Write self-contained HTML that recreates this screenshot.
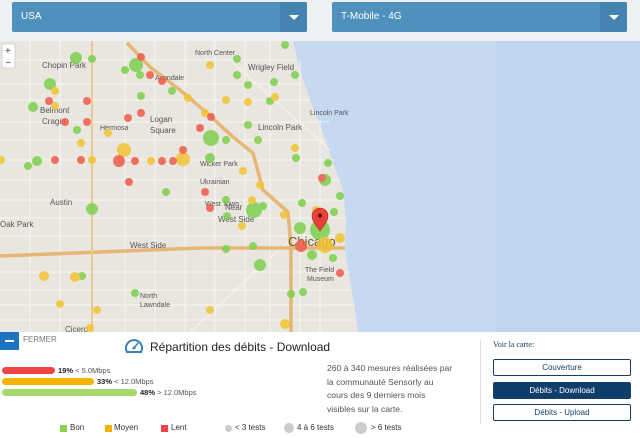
<!DOCTYPE html>
<html><head><meta charset="utf-8"><style>
*{margin:0;padding:0;box-sizing:border-box}
body{width:640px;height:438px;overflow:hidden;background:#fff;font-family:"Liberation Sans",sans-serif;position:relative}
.top{position:absolute;left:0;top:0;width:640px;height:41px;background:#edf1f4}
.dd{position:absolute;top:2px;height:30px;background:#4f91bd;border-radius:2px;color:#fff;font-size:10px;line-height:30px;padding-left:9px}
.dd .ar{position:absolute;right:0;top:0;width:27px;height:30px;background:#4583b0;border-radius:0 2px 2px 0}
.dd .ar:after{content:"";position:absolute;left:9px;top:13px;border-left:5px solid transparent;border-right:5px solid transparent;border-top:5px solid #fff}
.map{position:absolute;left:0;top:41px}
.panel{position:absolute;left:0;top:332px;width:640px;height:106px;background:#fff}
.t{position:absolute;white-space:nowrap}
.bar{position:absolute;left:2px;height:7px;border-radius:4px}
.btn{position:absolute;left:493px;width:138px;height:17px;border:1px solid #163f66;border-radius:2px;font-size:8px;text-align:center;line-height:15px;color:#163f66}
.lg{position:absolute;top:423px;font-size:8px;color:#333;white-space:nowrap}
.sq{position:absolute;width:7px;height:7px}
.ci{position:absolute;border-radius:50%;background:#ccc}
</style></head><body>
<div class="top">
<div class="dd" style="left:12px;width:295px">USA<div class="ar"></div></div>
<div class="dd" style="left:332px;width:295px">T-Mobile - 4G<div class="ar"></div></div>
</div>
<svg class="map" width="640" height="291" viewBox="0 41 640 291">
<rect x="0" y="41" width="640" height="291" fill="#e9e6df"/>
<path d="M293 41 L300 70 L310 100 L322 130 L332 160 L343 190 L346 220 L345 250 L350 280 L355 310 L358 332 L640 332 L640 41 Z" fill="#c6d9f0"/>
<rect x="496" y="41" width="144" height="291" fill="#c2d5ef"/>
<g stroke="#fff" stroke-width="1" opacity="0.6">
<path d="M0 84H300M0 122H330M0 160H335M0 200H345M0 236H345M0 272H350M0 305H355M0 60H295M0 100H310M0 140H325M0 180H340M0 218H345M0 290H350M0 320H356"/>
<path d="M30 41V332M60 41V332M92 41V332M125 41V332M155 41V332M185 41V332M215 41V332M245 41V332M270 41V332M300 60V332M320 120V332"/>
<path d="M190 332L290 240M230 60L330 150"/>
</g>
<g fill="none" stroke="#e6b676" stroke-width="3.5">
<path d="M127 43L150 67L180 90L207 113L233 137L253 153L263 190L288 212L291 248L291 332"/>
<path d="M0 256L200 248L345 248"/>
<path d="M92 41V332" stroke-width="2" stroke="#ecc894"/>
</g>
<g font-size="8" fill="#555" font-family="Liberation Sans">
<text x="42" y="68">Chopin Park</text><text x="40" y="113">Belmont</text><text x="42" y="124">Cragin</text>
<text x="150" y="122">Logan</text><text x="150" y="133">Square</text><text x="100" y="130" font-size="7">Hermosa</text>
<text x="200" y="166" font-size="7">Wicker Park</text><text x="248" y="70">Wrigley Field</text><text x="258" y="130">Lincoln Park</text>
<text x="50" y="205">Austin</text><text x="0" y="227">Oak Park</text><text x="130" y="248">West Side</text>
<text x="225" y="210">Near</text><text x="218" y="222">West Side</text><text x="288" y="246" font-size="13" fill="#6a5a20">Chicago</text>
<text x="305" y="272" font-size="7">The Field</text><text x="307" y="281" font-size="7">Museum</text>
<text x="140" y="298" font-size="7">North</text><text x="140" y="307" font-size="7">Lawndale</text><text x="65" y="332">Cicero</text>
<text x="310" y="115" font-size="7">Lincoln Park</text><text x="195" y="55" font-size="7">North Center</text><text x="155" y="80" font-size="7">Avondale</text>
<text x="200" y="184" font-size="7">Ukrainian</text><text x="205" y="206" font-size="7">West Town</text>
</g>
<g opacity="0.85">
<g fill="#7ed04e">
<circle cx="76" cy="58" r="6"/><circle cx="92" cy="59" r="4"/><circle cx="136" cy="65" r="7"/><circle cx="125" cy="70" r="4"/><circle cx="140" cy="75" r="4"/><circle cx="50" cy="84" r="6"/><circle cx="33" cy="107" r="5"/><circle cx="77" cy="130" r="4"/><circle cx="141" cy="96" r="4"/><circle cx="172" cy="91" r="4"/><circle cx="237" cy="59" r="4"/><circle cx="237" cy="75" r="4"/><circle cx="248" cy="85" r="4"/><circle cx="270" cy="101" r="4"/><circle cx="285" cy="45" r="4"/><circle cx="295" cy="75" r="4"/><circle cx="274" cy="82" r="4"/><circle cx="248" cy="125" r="4"/><circle cx="211" cy="138" r="8"/><circle cx="210" cy="158" r="5"/><circle cx="226" cy="140" r="4"/><circle cx="258" cy="140" r="4"/><circle cx="37" cy="161" r="5"/><circle cx="28" cy="166" r="4"/><circle cx="92" cy="209" r="6"/><circle cx="166" cy="192" r="4"/><circle cx="226" cy="200" r="4"/><circle cx="227" cy="216" r="4"/><circle cx="254" cy="210" r="8"/><circle cx="263" cy="206" r="4"/><circle cx="226" cy="249" r="4"/><circle cx="253" cy="246" r="4"/><circle cx="260" cy="265" r="6"/><circle cx="135" cy="293" r="4"/><circle cx="291" cy="294" r="4"/><circle cx="303" cy="292" r="4"/><circle cx="82" cy="276" r="4"/><circle cx="325" cy="180" r="6"/><circle cx="340" cy="196" r="4"/><circle cx="320" cy="230" r="10"/><circle cx="300" cy="228" r="6"/><circle cx="334" cy="212" r="4"/><circle cx="312" cy="255" r="5"/><circle cx="333" cy="258" r="4"/><circle cx="302" cy="203" r="4"/><circle cx="296" cy="158" r="4"/><circle cx="328" cy="163" r="4"/></g>
<g fill="#f2c332">
<circle cx="210" cy="65" r="4"/><circle cx="188" cy="98" r="4"/><circle cx="226" cy="100" r="4"/><circle cx="248" cy="102" r="4"/><circle cx="275" cy="97" r="4"/><circle cx="205" cy="113" r="4"/><circle cx="55" cy="91" r="4"/><circle cx="55" cy="106" r="4"/><circle cx="108" cy="133" r="4"/><circle cx="81" cy="143" r="4"/><circle cx="124" cy="150" r="7"/><circle cx="183" cy="159" r="7"/><circle cx="1" cy="160" r="4"/><circle cx="92" cy="160" r="4"/><circle cx="151" cy="161" r="4"/><circle cx="243" cy="171" r="4"/><circle cx="260" cy="185" r="4"/><circle cx="295" cy="148" r="4"/><circle cx="242" cy="226" r="4"/><circle cx="252" cy="200" r="4"/><circle cx="44" cy="276" r="5"/><circle cx="75" cy="277" r="5"/><circle cx="60" cy="304" r="4"/><circle cx="97" cy="310" r="4"/><circle cx="210" cy="310" r="4"/><circle cx="90" cy="328" r="4"/><circle cx="285" cy="324" r="5"/><circle cx="325" cy="245" r="8"/><circle cx="316" cy="210" r="4"/><circle cx="340" cy="238" r="5"/><circle cx="284" cy="215" r="4"/></g>
<g fill="#ef5b4a">
<circle cx="141" cy="57" r="4"/><circle cx="150" cy="75" r="4"/><circle cx="162" cy="81" r="4"/><circle cx="49" cy="101" r="4"/><circle cx="87" cy="101" r="4"/><circle cx="65" cy="122" r="4"/><circle cx="87" cy="122" r="4"/><circle cx="141" cy="113" r="4"/><circle cx="128" cy="118" r="4"/><circle cx="200" cy="128" r="4"/><circle cx="211" cy="117" r="4"/><circle cx="183" cy="150" r="4"/><circle cx="119" cy="161" r="6"/><circle cx="55" cy="160" r="4"/><circle cx="81" cy="160" r="4"/><circle cx="135" cy="161" r="4"/><circle cx="162" cy="161" r="4"/><circle cx="173" cy="161" r="4"/><circle cx="129" cy="182" r="4"/><circle cx="210" cy="208" r="4"/><circle cx="205" cy="192" r="4"/><circle cx="301" cy="246" r="6"/><circle cx="340" cy="273" r="4"/><circle cx="322" cy="178" r="4"/></g>
</g>
<path d="M320 231 C313 222 312 219 312 216 A7 7 0 0 1 328 216 C328 219 327 222 320 231Z" fill="#e8413a" stroke="#b22" stroke-width="0.6"/>
<circle cx="320" cy="215.5" r="2" fill="#5a0e0a"/>
<rect x="2" y="44" width="13" height="24" fill="#fff" stroke="#ccc" stroke-width="0.8"/>
<text x="5" y="54" font-size="10" fill="#444">+</text><text x="5.5" y="66" font-size="10" fill="#444">−</text>
</svg>
<div class="panel">
<div style="position:absolute;left:0;top:0;width:19px;height:18px;background:#1c73c0;"></div>
<div style="position:absolute;left:5px;top:8px;width:9px;height:2px;background:#fff"></div>
<div class="t" style="left:23px;top:3px;font-size:8px;color:#777">FERMER</div>
<svg style="position:absolute;left:124px;top:5px" width="20" height="18" viewBox="0 0 20 18"><path d="M3 15A8 8 0 1 1 17 15Z" fill="none" stroke="#3a7fb8" stroke-width="2"/><path d="M10 11L14 6" stroke="#3a7fb8" stroke-width="1.5"/><circle cx="10" cy="11" r="1.5" fill="#3a7fb8"/></svg>
<div class="t" style="left:150px;top:8px;font-size:12px;color:#222">Répartition des débits - Download</div>
<div class="bar" style="top:35px;width:53px;background:#f04447"></div>
<div class="bar" style="top:46px;width:92px;background:#f4b400"></div>
<div class="bar" style="top:57px;width:135px;background:#a6d96a"></div>
<div class="t" style="left:58px;top:34px;font-size:7.5px;color:#555"><b style="color:#222">19%</b> &lt; 5.0Mbps</div>
<div class="t" style="left:97px;top:45px;font-size:7.5px;color:#555"><b style="color:#222">33%</b> &lt; 12.0Mbps</div>
<div class="t" style="left:140px;top:56px;font-size:7.5px;color:#555"><b style="color:#222">48%</b> &gt; 12.0Mbps</div>
<div class="t" style="left:327px;top:30px;font-size:8.6px;line-height:13.5px;color:#555;white-space:normal;width:152px">260 à 340 mesures réalisées par<br>la communauté Sensorly au<br>cours des 9 derniers mois<br>visibles sur la carte.</div>
<div style="position:absolute;left:480px;top:8px;width:1px;height:84px;background:#ddd"></div>
<div class="t" style="left:493px;top:8px;font-size:8px;color:#163f66;font-family:'Liberation Serif',serif">Voir la carte:</div>
<div class="btn" style="top:27px">Couverture</div>
<div class="btn" style="top:50px;background:#0f3e6b;color:#fff">Débits - Download</div>
<div class="btn" style="top:72px">Débits - Upload</div>
</div>
<div class="sq" style="left:60px;top:425px;background:#8bd04e"></div><div class="lg" style="left:70px">Bon</div>
<div class="sq" style="left:105px;top:425px;background:#f4b400"></div><div class="lg" style="left:114px">Moyen</div>
<div class="sq" style="left:161px;top:425px;background:#f04447"></div><div class="lg" style="left:171px">Lent</div>
<div class="ci" style="left:225px;top:425px;width:7px;height:7px"></div><div class="lg" style="left:235px">&lt; 3 tests</div>
<div class="ci" style="left:284px;top:423px;width:10px;height:10px"></div><div class="lg" style="left:297px">4 à 6 tests</div>
<div class="ci" style="left:355px;top:422px;width:12px;height:12px"></div><div class="lg" style="left:371px">&gt; 6 tests</div>
</body></html>
